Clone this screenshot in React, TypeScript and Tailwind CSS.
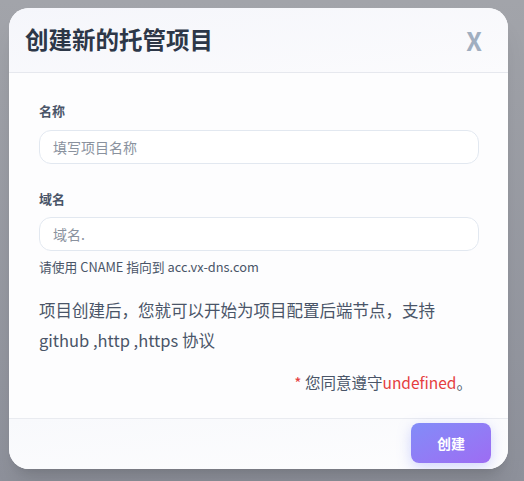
export default function App() {
  return (
    <div
      className="min-h-[481px] w-[524px] bg-gradient-to-b from-[#a2a4aa] to-[#8e919b] pl-[9px] pr-[16px] pt-[8px] pb-[12px]"
      style={{ fontFamily: '"Noto Sans CJK SC", "Noto Sans", sans-serif' }}
    >
      <div className="flex h-[461px] w-[499px] flex-col overflow-hidden rounded-[20px] bg-[#fdfdfe] shadow-xl">
        <div className="flex h-[65px] shrink-0 items-center justify-between border-b border-[#e6e8ee] bg-gradient-to-br from-[#f5f6fb] to-[#fbfbfd] pl-[16px] pr-[26px]">
          <h1 className="text-[23.5px] font-bold leading-none text-[#2d3748]">创建新的托管项目</h1>
          <span className="text-[25px] font-bold leading-none text-[#a0aec0]">X</span>
        </div>

        <div className="flex-1 px-[30px] pt-[28px]">
          <label className="block text-[13px] font-bold leading-[20px] text-[#4a5568]">名称</label>
          <input
            placeholder="填写项目名称"
            className="mt-[9px] block h-[34px] w-[440px] rounded-[12px] border border-[#e2e8f0] bg-white px-[13px] text-[14px] text-[#4a5568] outline-none placeholder:text-[#8a929e]"
          />

          <label className="mt-[25px] block text-[13px] font-bold leading-[20px] text-[#4a5568]">域名</label>
          <input
            placeholder="域名."
            className="mt-[8px] block h-[34px] w-[440px] rounded-[12px] border border-[#e2e8f0] bg-white px-[13px] text-[14px] text-[#4a5568] outline-none placeholder:text-[#8a929e]"
          />
          <p className="mt-[7px] text-[12.8px] leading-[18px] text-[#4a5568]">请使用 CNAME 指向到 acc.vx-dns.com</p>

          <p className="mt-[19px] w-[420px] text-[16.5px] leading-[30px] text-[#4a5568]">
            项目创建后，您就可以开始为项目配置后端节点，支持 github ,http ,https 协议
          </p>

          <p className="mt-[15px] pr-[6px] text-right text-[15.5px] leading-[24px] text-[#4a5568]">
            <span className="text-[#e53e3e]">*</span> 您同意遵守<span className="text-[#e53e3e]">undefined</span>。
          </p>
        </div>

        <div className="flex h-[51px] shrink-0 items-start justify-end border-t border-[#e9ebf0] bg-gradient-to-br from-[#f8f9fc] to-[#fdfdfe] pr-[17px] pt-[4px]">
          <button className="h-[40px] w-[80px] rounded-[8px] bg-gradient-to-br from-[#818cf8] to-[#9d6cf3] text-[14px] font-bold text-white shadow-[0_4px_14px_rgba(129,140,248,0.35)]">
            创建
          </button>
        </div>
      </div>
    </div>
  );
}
